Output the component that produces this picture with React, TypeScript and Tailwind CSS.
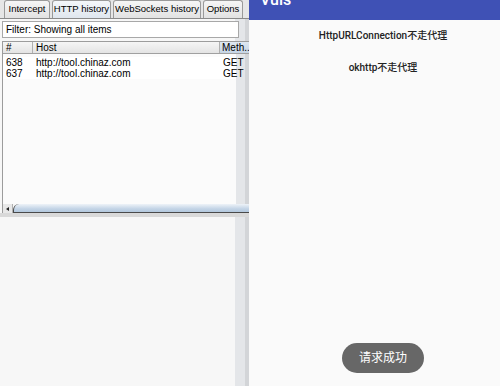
import React from "react";

const burpFont = { fontFamily: '"Liberation Sans", "DejaVu Sans", sans-serif' };

function Tab({ label, active, w }: { label: string; active?: boolean; w: string }) {
  return (
    <div
      className={`${w} shrink-0 h-[18px] mr-[2px] flex items-center justify-center whitespace-nowrap rounded-t-[3px] border border-b-0 border-[#9a9a9a] text-[9.5px] text-black ${
        active ? "bg-[linear-gradient(#f4f7fa,#dfe6ee)]" : "bg-[linear-gradient(#f6f6f6,#e2e2e2)]"
      }`}
    >
      {label}
    </div>
  );
}

export default function App() {
  return (
    <div className="flex w-[500px] h-[386px] overflow-hidden bg-[#f7f7f7]">
      {/* Burp panel */}
      <div
        className="w-[249px] shrink-0 h-full flex flex-col bg-[linear-gradient(to_right,#f7f7f7_235px,#e4e6e9_235px,#e4e6e9_245px,#d3d5d8_245px)]"
        style={burpFont}
      >
        <div className="h-[19px] flex items-end pl-[4px] bg-[#e6e6e6] border-b border-[#8a8a8a]">
          <Tab label="Intercept" w="w-[46px]" />
          <Tab label="HTTP history" w="w-[59px]" active />
          <Tab label="WebSockets history" w="w-[88px]" />
          <Tab label="Options" w="w-[40px]" />
        </div>
        <div className="mt-[2px] ml-[2px] w-[237px] h-[17px] bg-white border border-[#a8a8a8] flex items-center pl-[3px] text-[10px] text-black">
          Filter: Showing all items
        </div>
        <div className="mt-[3px] ml-[2px] flex flex-col h-[172px] border-l border-t border-[#9c9c9c]">
          <div className="h-[12px] flex text-[10px] text-black border-b border-[#a0a0a0]">
            <div className="w-[30px] shrink-0 pl-[3px] flex items-center bg-[linear-gradient(#f5f5f5,#e4e4e4)] border-r border-[#b0b0b0]">#</div>
            <div className="w-[187px] shrink-0 pl-[3px] flex items-center bg-[linear-gradient(#f5f5f5,#e4e4e4)] border-r border-[#b0b0b0]">Host</div>
            <div className="flex-1 pl-[2px] flex items-center bg-[linear-gradient(#dfe8f1,#c6d5e5)] overflow-hidden whitespace-nowrap">Meth..</div>
          </div>
          <div className="w-[233px] flex-1 bg-[#fbfbfb] pt-[3px] text-[10px] text-black">
            {[
              ["638", "http://tool.chinaz.com", "GET"],
              ["637", "http://tool.chinaz.com", "GET"],
            ].map(([n, h, m]) => (
              <div key={n} className="h-[11px] flex items-center bg-white leading-none">
                <div className="w-[31px] shrink-0 pl-[3px]">{n}</div>
                <div className="w-[188px] shrink-0 pl-[2px]">{h}</div>
                <div className="flex-1 pl-[1px]">{m}</div>
              </div>
            ))}
          </div>
          <div className="h-[9px] flex">
            <div className="w-[10px] h-full bg-[#e8e8e8] border-r border-[#b0b0b0] flex items-center justify-center">
              <div className="w-0 h-0 border-y-[2px] border-y-transparent border-r-[3px] border-r-[#222]" />
            </div>
            <div className="flex-1 h-full rounded-tl-[6px] border-l border-b border-[#4a4a4a] bg-[linear-gradient(#eef3f8,#c3d4e6_60%,#b3c8dd)]" />
          </div>
        </div>
        <div className="h-[4px] w-full bg-[#d9d9d9]" />
      </div>

      {/* Android panel */}
      <div className="flex-1 h-full overflow-hidden bg-[#fafafa]">
        <div className="w-[268px] h-full flex flex-col" style={{ fontFamily: 'Roboto, "Noto Sans CJK SC", sans-serif' }}>
          <div className="h-[20px] bg-[#3f51b5] pl-[11px] overflow-hidden">
            <div className="mt-[-10px] text-[16px] font-medium text-white leading-[20px]">Vuls</div>
          </div>
          <div className="mt-[10px] text-center text-[10px] font-medium text-[#222] leading-[12px]">
            HttpURLConnection不走代理
          </div>
          <div className="mt-[20px] text-center text-[10px] font-medium text-[#222] leading-[12px]">
            okhttp不走代理
          </div>
          <div className="flex-1" />
          <div className="mb-[13px] flex justify-center">
            <div className="w-[82px] h-[30px] rounded-full bg-[#676767] text-white text-[12px] flex items-center justify-center">
              请求成功
            </div>
          </div>
        </div>
      </div>
    </div>
  );
}
